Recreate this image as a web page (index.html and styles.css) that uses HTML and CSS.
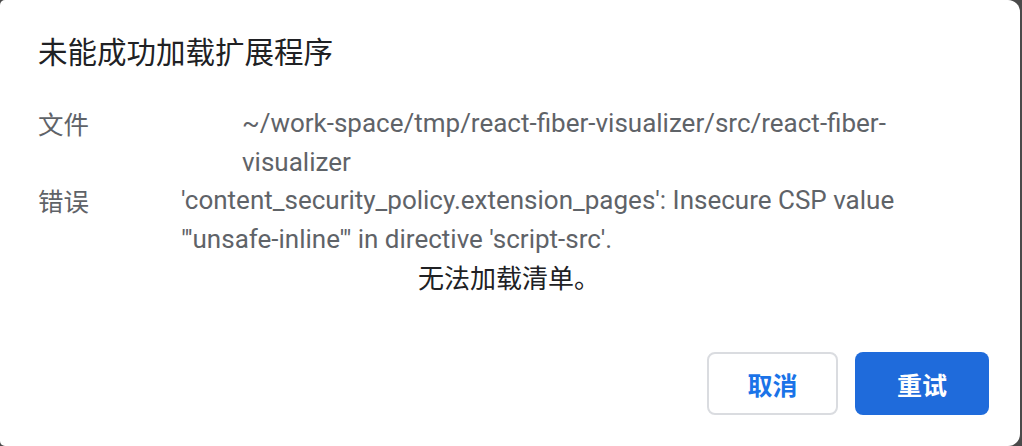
FILE: index.html
```html
<!DOCTYPE html>
<html lang="zh-CN">
<head>
<meta charset="utf-8">
<link rel="stylesheet" href="styles.css">
</head>
<body>
<div class="dialog">
  <h1 class="title">未能成功加载扩展程序</h1>
  <div class="details">
    <div class="row">
      <div class="label">文件</div>
      <div class="value file">~/work-space/tmp/react-fiber-visualizer/src/react-fiber-<br>visualizer</div>
    </div>
    <div class="row">
      <div class="label">错误</div>
      <div class="value">'content_security_policy.extension_pages': Insecure CSP value<br>"'unsafe-inline'" in directive 'script-src'.</div>
    </div>
    <div class="note">无法加载清单。</div>
  </div>
  <div class="footer">
    <button class="btn cancel">取消</button>
    <button class="btn primary">重试</button>
  </div>
</div>
</body>
</html>
```
FILE: styles.css
```css
html, body {
  margin: 0;
  padding: 0;
  background: #4a4a4a;
}
body {
  width: 1022px;
  height: 446px;
  overflow: hidden;
  font-family: Roboto, "Noto Sans CJK SC", sans-serif;
}
.dialog {
  box-sizing: border-box;
  width: 1020px;
  height: 446px;
  background: #ffffff;
  border-radius: 5px 12px 12px 5px;
  padding: 31px 31px 31px 38px;
  display: flex;
  flex-direction: column;
}
.title {
  margin: 0;
  font-family: "Noto Sans CJK SC", sans-serif;
  font-weight: 400;
  font-size: 29.5px;
  line-height: 38px;
  color: #202124;
}
.details {
  margin-top: 35px;
  color: #5f6368;
  font-size: 26px;
  line-height: 38.5px;
}
.row {
  display: flex;
}
.label {
  width: 143px;
  flex: none;
  font-family: "Noto Sans CJK SC", sans-serif;
  font-size: 25.5px;
}
.value {
  flex: 1;
  white-space: nowrap;
}
.value.file {
  padding-left: 61px;
}
.note {
  font-family: "Noto Sans CJK SC", sans-serif;
  font-size: 26px;
  color: #202124;
  padding-left: 380px;
}
.footer {
  margin-top: auto;
  display: flex;
  justify-content: flex-end;
  gap: 17px;
}
.btn {
  box-sizing: border-box;
  height: 63px;
  border-radius: 8px;
  font-family: "Noto Sans CJK SC", sans-serif;
  font-weight: 700;
  font-size: 25px;
  padding: 0;
  cursor: pointer;
}
.cancel {
  width: 131px;
  background: #ffffff;
  border: 2px solid #dadce0;
  color: #1a73e8;
}
.primary {
  width: 134px;
  background: #1f6bdb;
  border: none;
  color: #ffffff;
}
```
